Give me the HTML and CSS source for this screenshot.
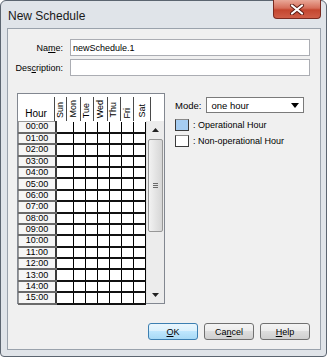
FILE: index.html
```html
<!DOCTYPE html>
<html lang="en">

<head>
    <meta charset="UTF-8">
    <title>New Schedule</title>
    <link rel="stylesheet" href="styles.css">
</head>

<body>
    <div class="window">
        <div class="titlebar">
            <span class="title">New Schedule</span>
            <button class="close" title="Close">
                <svg width="16" height="11" viewBox="0 0 16 11">
                    <path d="M3 1.5 L13 9.5 M13 1.5 L3 9.5" stroke="#5a1a12" stroke-width="4" stroke-linecap="round" />
                    <path d="M3 1.5 L13 9.5 M13 1.5 L3 9.5" stroke="#fff" stroke-width="2.2" stroke-linecap="round" />
                </svg>
            </button>
        </div>

        <div class="client">
            <div class="fields">
                <label for="name">Na<u>m</u>e:</label>
                <input type="text" id="name" class="text" value="newSchedule.1">
                <label for="desc">Des<u>c</u>ription:</label>
                <input type="text" id="desc" class="text">
            </div>

            <div class="main">
                <div class="schedule">
                    <div class="sched-head">
                        <div class="hour-head">Hour</div>
                        <div class="day-head first"><span>Sun</span></div>
                        <div class="day-head"><span>Mon</span></div>
                        <div class="day-head"><span>Tue</span></div>
                        <div class="day-head"><span>Wed</span></div>
                        <div class="day-head"><span>Thu</span></div>
                        <div class="day-head"><span>Fri</span></div>
                        <div class="day-head last"><span>Sat</span></div>
                    </div>
                    <div class="sched-body">
                        <table class="grid">
                            <tr><th>00:00</th><td></td><td></td><td></td><td></td><td></td><td></td><td></td></tr>
                            <tr><th>01:00</th><td></td><td></td><td></td><td></td><td></td><td></td><td></td></tr>
                            <tr><th>02:00</th><td></td><td></td><td></td><td></td><td></td><td></td><td></td></tr>
                            <tr><th>03:00</th><td></td><td></td><td></td><td></td><td></td><td></td><td></td></tr>
                            <tr><th>04:00</th><td></td><td></td><td></td><td></td><td></td><td></td><td></td></tr>
                            <tr><th>05:00</th><td></td><td></td><td></td><td></td><td></td><td></td><td></td></tr>
                            <tr><th>06:00</th><td></td><td></td><td></td><td></td><td></td><td></td><td></td></tr>
                            <tr><th>07:00</th><td></td><td></td><td></td><td></td><td></td><td></td><td></td></tr>
                            <tr><th>08:00</th><td></td><td></td><td></td><td></td><td></td><td></td><td></td></tr>
                            <tr><th>09:00</th><td></td><td></td><td></td><td></td><td></td><td></td><td></td></tr>
                            <tr><th>10:00</th><td></td><td></td><td></td><td></td><td></td><td></td><td></td></tr>
                            <tr><th>11:00</th><td></td><td></td><td></td><td></td><td></td><td></td><td></td></tr>
                            <tr><th>12:00</th><td></td><td></td><td></td><td></td><td></td><td></td><td></td></tr>
                            <tr><th>13:00</th><td></td><td></td><td></td><td></td><td></td><td></td><td></td></tr>
                            <tr><th>14:00</th><td></td><td></td><td></td><td></td><td></td><td></td><td></td></tr>
                            <tr><th>15:00</th><td></td><td></td><td></td><td></td><td></td><td></td><td></td></tr>
                        </table>
                        <div class="scrollbar">
                            <div class="arrow">
                                <svg width="7" height="4" viewBox="0 0 7 4"><path d="M0 4 L3.5 0 L7 4 Z" fill="#222" /></svg>
                            </div>
                            <div class="thumb">
                                <svg width="5" height="6" viewBox="0 0 5 6">
                                    <path d="M0 0.5 H5 M0 2.5 H5 M0 4.5 H5" stroke="#6a6a6a" stroke-width="1" />
                                </svg>
                            </div>
                            <div class="track"></div>
                            <div class="arrow">
                                <svg width="7" height="4" viewBox="0 0 7 4"><path d="M0 0 L7 0 L3.5 4 Z" fill="#222" /></svg>
                            </div>
                        </div>
                    </div>
                </div>

                <div class="side">
                    <div class="mode-row">
                        <span>Mode:</span>
                        <div class="select">
                            <span>one hour</span>
                            <svg width="8" height="5" viewBox="0 0 8 5"><path d="M0 0 L8 0 L4 5 Z" fill="#000" /></svg>
                        </div>
                    </div>
                    <div class="legend">
                        <span class="swatch on"></span>
                        <span>: Operational Hour</span>
                    </div>
                    <div class="legend">
                        <span class="swatch off"></span>
                        <span>: Non-operational Hour</span>
                    </div>
                </div>
            </div>

            <div class="buttons">
                <button class="btn default"><u>O</u>K</button>
                <button class="btn">Ca<u>n</u>cel</button>
                <button class="btn"><u>H</u>elp</button>
            </div>
        </div>
    </div>
</body>

</html>
```

FILE: styles.css
```css
body {
    margin: 0;
    font-family: "Liberation Sans", Arial, sans-serif;
    font-size: 9px;
    color: #000;
}

.window {
    width: 327px;
    height: 357px;
    box-sizing: border-box;
    border: 1px solid #5c6570;
    border-radius: 6px 6px 4px 4px;
    background: #e0e4e9;
    padding: 0 5px 6px 6px;
    display: flex;
    flex-direction: column;
}

.titlebar {
    height: 27px;
    display: flex;
    justify-content: space-between;
    align-items: flex-start;
}

.title {
    font-size: 12px;
    margin: 8px 0 0 1px;
    color: #1a1a1a;
}

.close {
    width: 48px;
    height: 19px;
    margin-top: -1px;
    padding: 0;
    border: 1px solid #7a2a20;
    border-top: none;
    border-radius: 0 0 4px 4px;
    background: linear-gradient(#e9a898, #d66e5a 45%, #c4462f 55%, #cf5e48);
    display: flex;
    align-items: center;
    justify-content: center;
}

.client {
    flex: 1;
    border: 1px solid #9aa2ac;
    background: #f0f0f0;
    display: flex;
    flex-direction: column;
}

.fields {
    display: grid;
    grid-template-columns: 55px 240px;
    column-gap: 7px;
    row-gap: 3px;
    margin-top: 10px;
    align-items: center;
}

.fields label {
    text-align: right;
}

.text {
    height: 17px;
    box-sizing: border-box;
    border: 1px solid #abadb3;
    background: #fff;
    font: inherit;
    padding: 0 2px;
    margin: 0;
}

.main {
    display: flex;
    align-items: flex-start;
    gap: 10px;
    margin: 17px 0 0 9px;
}

.schedule {
    width: 148px;
    height: 211px;
    box-sizing: border-box;
    border: 1px solid #828790;
    background: #fff;
}

.sched-head {
    height: 27px;
    display: flex;
}

.hour-head {
    width: 36px;
    display: flex;
    align-items: flex-end;
    justify-content: center;
    padding-bottom: 2px;
    box-sizing: border-box;
    font-size: 10px;
}

.day-head {
    width: 13.4px;
    margin-top: 3px;
    box-sizing: border-box;
    border-right: 1px solid #4a4a4a;
    display: flex;
    align-items: flex-end;
    justify-content: center;
    padding-bottom: 3px;
}

.day-head.first {
    border-left: 1px solid #4a4a4a;
}

.day-head.last {
    width: 17px;
}

.day-head span {
    writing-mode: vertical-rl;
    transform: rotate(180deg);
    line-height: 1;
}

.sched-body {
    display: flex;
    height: 182px;
}

.grid {
    border-collapse: collapse;
    width: 130px;
    height: 182px;
}

.grid tr {
    height: 11.375px;
}

.grid th {
    width: 36px;
    padding: 0;
    font-weight: normal;
    font-size: 9px;
    line-height: 1;
    background: #f6f6f6;
    border: 1px solid #9a9a9a;
    border-right: 2px solid #3a3a3a;
    border-bottom: 2px solid #6a6a6a;
}

.grid td {
    padding: 0;
    border-right: 1px solid #000;
    border-bottom: 2px solid #111;
    background: #fff;
}

.scrollbar {
    width: 17px;
    display: flex;
    flex-direction: column;
    background: #ececec;
    border-left: 1px solid #e2e2e2;
}

.arrow {
    height: 17px;
    display: flex;
    align-items: center;
    justify-content: center;
}

.thumb {
    height: 93px;
    margin: 1px 1px 0;
    box-sizing: border-box;
    border: 1px solid #979797;
    border-radius: 2px;
    background: linear-gradient(to right, #f2f2f2, #d6d6d6);
    display: flex;
    align-items: center;
    justify-content: center;
}

.track {
    flex: 1;
}

.side {
    padding-top: 4px;
}

.mode-row {
    display: flex;
    align-items: center;
    gap: 5px;
    font-size: 9.5px;
}

.select {
    width: 98px;
    height: 16px;
    box-sizing: border-box;
    border: 1px solid #7a7a7a;
    background: #fff;
    display: flex;
    align-items: center;
    justify-content: space-between;
    padding: 0 4px;
}

.legend {
    display: flex;
    align-items: center;
    gap: 4px;
    margin-top: 6px;
}

.legend + .legend {
    margin-top: 4px;
}

.swatch {
    width: 14px;
    height: 12px;
    box-sizing: border-box;
    border: 1px solid #3a3a3a;
    border-top-color: #8a8a8a;
}

.swatch.on {
    background: #a6cdf2;
}

.swatch.off {
    background: #fff;
}

.buttons {
    margin-top: auto;
    display: flex;
    justify-content: flex-end;
    gap: 6px;
    padding: 0 10px 9px 0;
}

.btn {
    width: 50px;
    height: 17px;
    padding: 0;
    border: 1px solid #707070;
    border-radius: 3px;
    background: linear-gradient(#f4f4f4, #ebebeb 50%, #dddddd 50%, #cfcfcf);
    font: inherit;
    color: #000;
}

.btn.default {
    border-color: #3c7fb1;
    background: linear-gradient(#eaf6fd, #d9f0fc 50%, #bee6fd 50%, #a7d9f5);
}
```
